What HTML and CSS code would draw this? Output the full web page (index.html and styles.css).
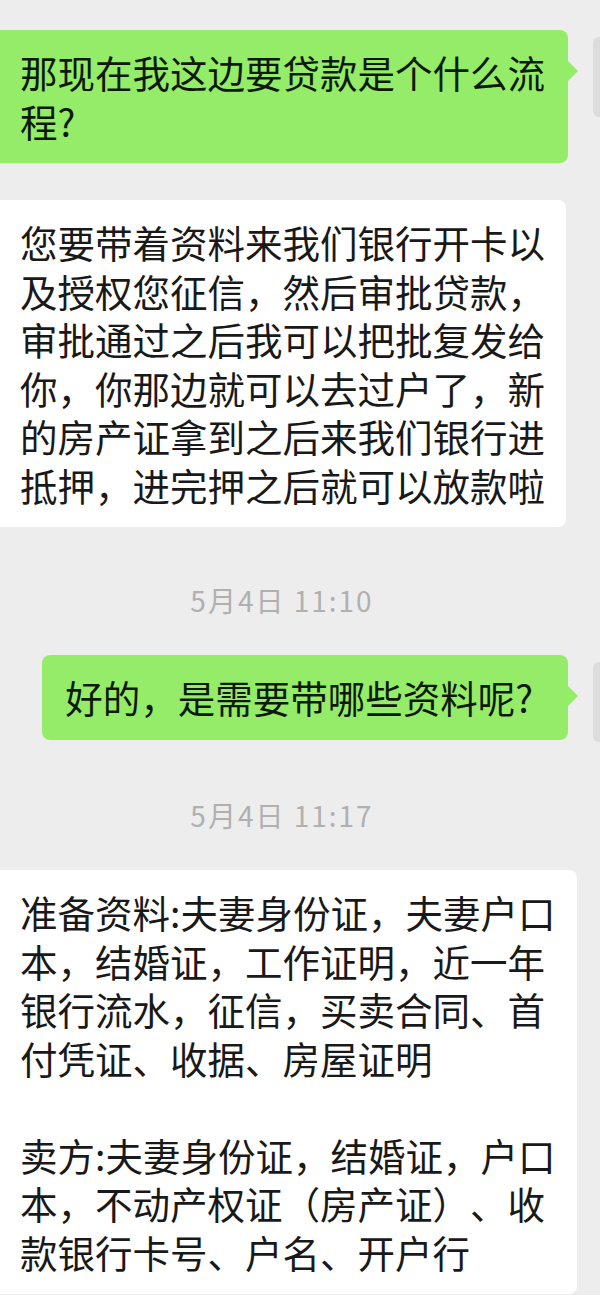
FILE: index.html
```html
<!DOCTYPE html>
<html lang="zh-CN">
<head>
<meta charset="utf-8">
<title>聊天记录</title>
<link rel="stylesheet" href="styles.css">
</head>
<body>
<main class="chat">
  <div class="row row-out row-first">
    <div class="bubble bubble-out bubble-wide">那现在我这边要贷款是个什么流程?</div>
    <div class="avatar"></div>
  </div>

  <div class="row row-in">
    <div class="bubble bubble-in bubble-in-a">您要带着资料来我们银行开卡以及授权您征信，然后审批贷款，审批通过之后我可以把批复发给你，你那边就可以去过户了，新的房产证拿到之后来我们银行进抵押，进完押之后就可以放款啦</div>
  </div>

  <div class="time">5月4日 11:10</div>

  <div class="row row-out">
    <div class="bubble bubble-out bubble-short">好的，是需要带哪些资料呢?</div>
    <div class="avatar"></div>
  </div>

  <div class="time">5月4日 11:17</div>

  <div class="row row-in">
    <div class="bubble bubble-in bubble-in-b">
      <p class="para">准备资料:夫妻身份证，夫妻户口本，结婚证，工作证明，近一年银行流水，征信，买卖合同、首付凭证、收据、房屋证明</p>
      <p class="para">卖方:夫妻身份证，结婚证，户口本，不动产权证（房产证）、收款银行卡号、户名、开户行</p>
    </div>
  </div>
</main>
</body>
</html>
```

FILE: styles.css
```css
html, body {
  margin: 0;
  padding: 0;
}

body {
  background: #ededed;
  width: 600px;
  height: 1295px;
  overflow: hidden;
  font-family: "Noto Sans CJK SC", "Noto Sans", sans-serif;
  color: #191919;
}

.chat {
  display: flex;
  flex-direction: column;
  gap: 37px;
  padding-top: 30px;
  overflow: hidden;
}

.row {
  display: flex;
  align-items: flex-start;
}

.row-out {
  justify-content: flex-end;
}

.row-in {
  justify-content: flex-start;
}

.bubble {
  position: relative;
  font-size: 37.5px;
  line-height: 48.5px;
  padding: 18px 20px;
  box-sizing: border-box;
  word-break: break-all;
  text-spacing-trim: space-all;
}

.bubble-out {
  background: #95ec69;
  color: #0e1a08;
  border-radius: 8px;
}

.bubble-out::after {
  content: "";
  position: absolute;
  right: -10px;
  top: 31px;
  border-top: 10px solid transparent;
  border-bottom: 10px solid transparent;
  border-left: 10px solid #95ec69;
}

.bubble-wide {
  width: 568px;
  border-radius: 0 8px 8px 0;
}

.bubble-short {
  padding: 18px 35px 18px 23px;
}

.avatar {
  flex: none;
  width: 7px;
  height: 80px;
  margin-top: 7px;
  margin-left: 25px;
  background: #dcdcdc;
  border-radius: 6px 0 0 6px;
}

.bubble-in {
  background: #ffffff;
  border-radius: 0 8px 8px 0;
}

.bubble-in-a {
  width: 566px;
}

.bubble-in-b {
  width: 577px;
  padding-right: 18px;
  display: flex;
  flex-direction: column;
  gap: 48.5px;
}

.para {
  margin: 0;
}

.time {
  margin-top: 18px;
  padding-right: 36px;
  text-align: center;
  font-size: 28px;
  line-height: 36px;
  letter-spacing: 2px;
  color: #b0b0b0;
}
```
